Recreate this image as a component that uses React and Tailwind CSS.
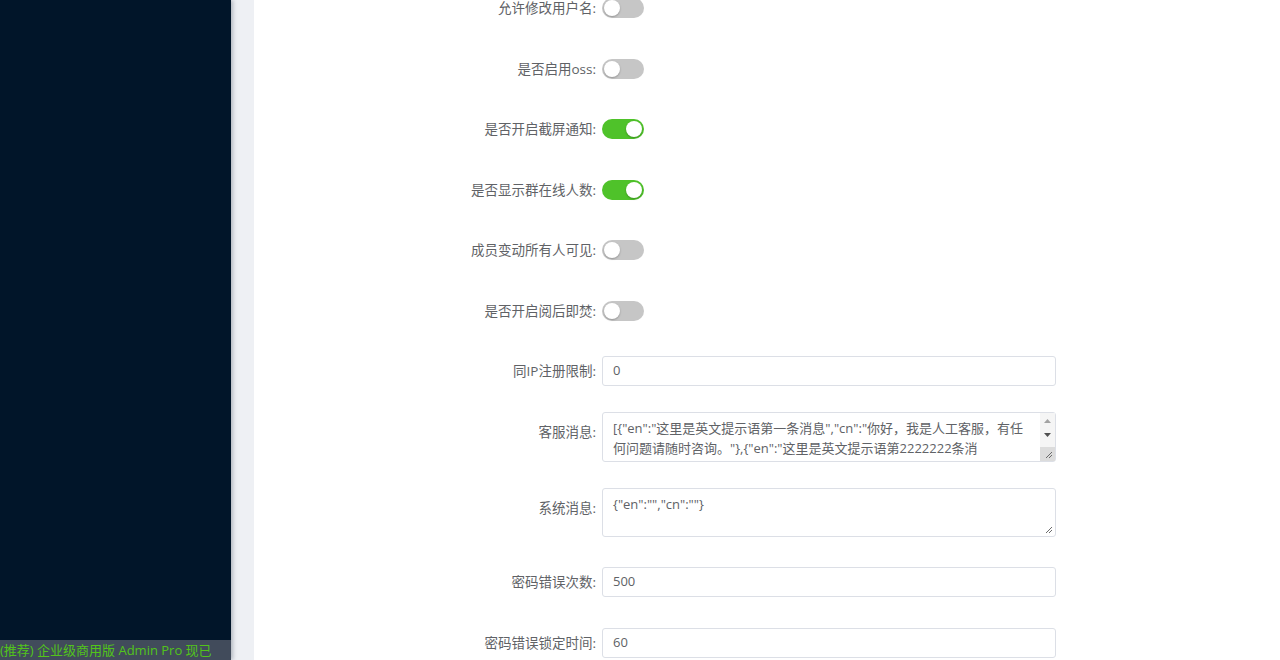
import React from 'react';

const FONT = { fontFamily: '"Open Sans", "Noto Sans CJK SC", sans-serif' };

function Switch({ on }) {
  return (
    <div
      className={`relative h-[20px] w-[42px] rounded-full ${on ? 'bg-[#4fc22a]' : 'bg-[#c6c6c6]'}`}
    >
      <span
        className={`absolute top-[2px] h-[16px] w-[16px] rounded-full bg-white shadow-[0_1px_2px_rgba(0,0,0,0.25)] ${on ? 'right-[2px]' : 'left-[2px]'}`}
      />
    </div>
  );
}

function Resize() {
  return (
    <svg width="8" height="8" viewBox="0 0 8 8" className="absolute bottom-[2px] right-[2px]">
      <path d="M7 1 L1 7 M7 4 L4 7" stroke="#6b6b6b" strokeWidth="1" />
    </svg>
  );
}

function Row({ label, children, className = '', top = false }) {
  return (
    <div className={`flex ${top ? 'items-start' : 'items-center'} ${className}`}>
      <label
        className={`w-[348px] shrink-0 pr-[6px] text-right text-[13.5px] text-[#606266] ${top ? 'leading-[40px]' : 'leading-[20px]'}`}
      >
        {label}:
      </label>
      {children}
    </div>
  );
}

function Input({ value }) {
  return (
    <div className="flex h-[30px] w-[454px] items-center rounded-[3px] border border-[#dcdfe6] bg-white pl-[10px] text-[13px] text-[#606266]">
      {value}
    </div>
  );
}

export default function App() {
  return (
    <div className="flex h-[660px] w-[1280px] overflow-hidden bg-white" style={FONT}>
      <aside className="relative z-10 flex w-[231px] shrink-0 flex-col bg-[#011529] shadow-[2px_0_4px_rgba(0,21,41,0.25)]">
        <div className="flex-1" />
        <div className="h-[20px] overflow-hidden whitespace-nowrap bg-[#414b5b] text-[13px] leading-[20px] text-[#52c41a]">
          (推荐) 企业级商用版 Admin Pro 现已
        </div>
      </aside>
      <div className="w-[23px] shrink-0 bg-[#eef0f4]" />
      <main className="flex-1 bg-white">
        <div className="-mt-[2px] flex flex-col">
          <Row label="允许修改用户名">
            <Switch on={false} />
          </Row>
          <Row label="是否启用oss" className="mt-[41px]">
            <Switch on={false} />
          </Row>
          <Row label="是否开启截屏通知" className="mt-[40px]">
            <Switch on />
          </Row>
          <Row label="是否显示群在线人数" className="mt-[41px]">
            <Switch on />
          </Row>
          <Row label="成员变动所有人可见" className="mt-[40px]">
            <Switch on={false} />
          </Row>
          <Row label="是否开启阅后即焚" className="mt-[41px]">
            <Switch on={false} />
          </Row>
          <Row label="同IP注册限制" className="mt-[35px]">
            <Input value="0" />
          </Row>
          <Row label="客服消息" className="mt-[26px]" top>
            <div className="relative flex h-[50px] w-[454px] rounded-[3px] border border-[#dcdfe6] bg-white">
              <div className="flex-1 overflow-hidden whitespace-nowrap pl-[10px] pt-[5px] text-[13px] leading-[20px] text-[#606266]">
                <div>[{'{'}"en":"这里是英文提示语第一条消息","cn":"你好，我是人工客服，有任</div>
                <div>何问题请随时咨询。"{'}'},{'{'}"en":"这里是英文提示语第2222222条消</div>
              </div>
              <div className="flex w-[15px] shrink-0 flex-col items-center bg-[#f5f5f5]">
                <svg width="7" height="4" viewBox="0 0 7 4" className="mt-[6px]">
                  <path d="M0 4 L3.5 0 L7 4 Z" fill="#a3a3a3" />
                </svg>
                <svg width="7" height="4" viewBox="0 0 7 4" className="mt-[10px]">
                  <path d="M0 0 L3.5 4 L7 0 Z" fill="#505050" />
                </svg>
                <div className="flex-1" />
                <div className="h-[14px] w-[15px] bg-[#dcdcdc]" />
              </div>
              <Resize />
            </div>
          </Row>
          <Row label="系统消息" className="mt-[26px]" top>
            <div className="relative h-[49px] w-[454px] rounded-[3px] border border-[#dcdfe6] bg-white pl-[10px] pt-[5px] text-[13px] leading-[20px] text-[#606266]">
              {'{'}"en":"","cn":""{'}'}
              <Resize />
            </div>
          </Row>
          <Row label="密码错误次数" className="mt-[30px]">
            <Input value="500" />
          </Row>
          <Row label="密码错误锁定时间" className="mt-[31px]">
            <Input value="60" />
          </Row>
        </div>
      </main>
    </div>
  );
}
